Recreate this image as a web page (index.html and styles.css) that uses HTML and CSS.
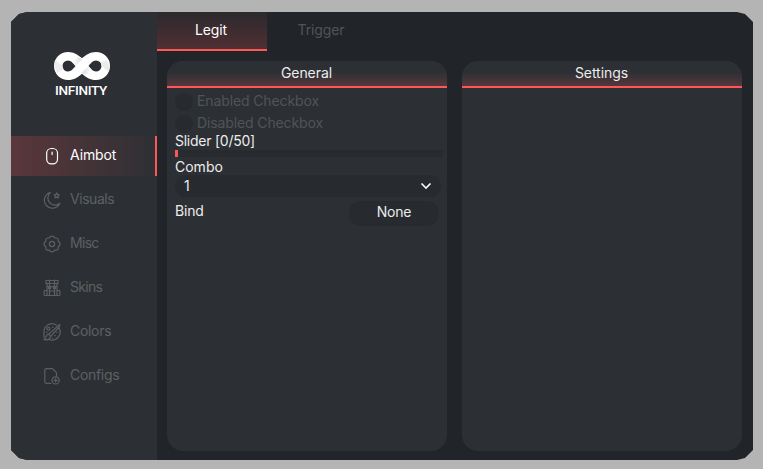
FILE: index.html
```html
<!DOCTYPE html>
<html lang="en">
<head>
<meta charset="utf-8">
<title>Infinity</title>
<link rel="stylesheet" href="styles.css">
</head>
<body>
<div class="window">
  <aside class="sidebar">
    <div class="brand">
      <svg class="brand-mark" viewBox="0 0 56 28">
        <defs>
          <linearGradient id="fold-left" x1="0" y1="0" x2="1" y2="0"><stop offset="0" stop-color="#fff"/><stop offset="1" stop-color="#dcddde"/></linearGradient>
          <linearGradient id="fold-right" x1="1" y1="0" x2="0" y2="0"><stop offset="0" stop-color="#fff"/><stop offset="1" stop-color="#dcddde"/></linearGradient>
        </defs>
        <path fill="#fff" fill-rule="evenodd" d="M14 0C20 0 24 3 28 6.300 32 3 36 0 42 0a14 14 0 0 1 0 28C36 28 32 25 28 21.700 24 25 20 28 14 28A14 14 0 0 1 14 0ZM14 8.500a5.500 5.500 0 0 0 0 11C17 19.500 19.500 16.500 21.500 14 19.500 11.500 17 8.500 14 8.500ZM42 8.500C39 8.500 36.500 11.500 34.500 14 36.500 16.500 39 19.500 42 19.500a5.500 5.500 0 0 0 0-11Z"/>
        <path fill="url(#fold-left)" d="M18 9.800 24.500 5 28.200 7.500 21.500 14Z"/>
        <path fill="url(#fold-right)" d="M38 18.200 31.500 23 27.800 20.500 34.500 14Z"/>
        <path fill="#ececed" d="M1.500 8 8.500 14l.5 3.500-6 3.500Q-.5 14 1.500 8ZM54.500 20 47.500 14 47 10.500 53 8Q56.500 14 54.500 20Z"/>
      </svg>
      <span class="brand-name">INFINITY</span>
    </div>
    <nav class="nav">
      <a class="nav-item active"><svg class="icon" viewBox="0 0 18 18"><rect x="3.700" y="1.500" width="10.800" height="15.300" rx="4.600"/><path d="M9.100 5v2.600"/></svg><span>Aimbot</span></a>
      <a class="nav-item"><svg class="icon" viewBox="0 0 18 18"><path d="M7.300 1.500A8 8 0 1 0 16.800 12.300 7 7 0 0 1 7.300 1.500Z"/><path d="m13.700 2 .8 1.600 1.800.3-1.300 1.200.3 1.800-1.600-.8-1.600.8.300-1.800L11.100 3.900l1.800-.3Z"/></svg><span class="tight">Visuals</span></a>
      <a class="nav-item"><svg class="icon" viewBox="0 0 18 18"><path d="M7 1.700Q9 .5 11 1.700L11.700 3 13.600 3Q15.400 3.400 15.300 5.300L15.200 6.400 16.500 7.400Q17.500 9 16.500 10.700L15.200 11.700 15.300 13.400Q14.900 15.200 13 15.100L11.700 15 10.800 16.300Q9 17.400 7.200 16.300L6.300 15 4.600 15.100Q2.800 14.900 2.800 13L2.900 11.700 1.500 10.700Q.5 9 1.500 7.400L2.900 6.400 2.800 4.900Q3.100 3.100 4.900 3L6.300 3Z"/><circle cx="9" cy="9" r="2.600"/></svg><span class="tighter">Misc</span></a>
      <a class="nav-item"><svg class="icon" viewBox="0 0 18 18"><path d="M3 1.500h12v3H3ZM4 4.500v11M14 4.500v11M6.500 1v15.500M11.500 1v15.500M4 7.500h10M6 12h6M3.500 16.500h11M1.500 11.500H4v5H2.200Q1 16.500 1 15v-2.200ZM16.500 11.500H14v5h1.800q1.200 0 1.200-1.500v-2.200Z"/><circle cx="6.500" cy="8.800" r="1.200"/><circle cx="11.500" cy="8.800" r="1.200"/></svg><span class="tighter">Skins</span></a>
      <a class="nav-item"><svg class="icon" viewBox="0 0 18 18"><path d="M13.500 2.200A8 8 0 0 0 1 9v5M16 5a8 8 0 0 1-10.500 11.200M16.800 1.500 5.600 11.100l2.100 2.200L16.200 4ZM5.300 11.200C3 11.200 3.500 14.500 1 16.700c3 .5 6.500-.3 6.500-3.300"/><circle cx="5.500" cy="5.800" r="1.500"/><path d="M9.400 4.100h.6M3.500 9.300h.5M13.600 9.500h.4M11.700 12.700h.5M9.600 15h.3"/></svg><span class="slim">Colors</span></a>
      <a class="nav-item"><svg class="icon" viewBox="0 0 18 18"><path d="M7.800 16.300H3.300Q1.800 16.300 1.800 14.500v-11Q1.800 1.700 3.500 1.700H9.500L13.500 5.700v3.300"/><circle cx="12.600" cy="13.400" r="3.600"/><path d="M12.600 11.800v3.200M11 13.400h3.200"/></svg><span class="slim">Configs</span></a>
    </nav>
  </aside>
  <main class="main">
    <div class="tabs">
      <a class="tab active">Legit</a>
      <a class="tab">Trigger</a>
    </div>
    <div class="panels">
      <section class="panel">
        <h2 class="panel-title">General</h2>
        <div class="panel-body">
          <div class="check"><i class="dot"></i><span>Enabled Checkbox</span></div>
          <div class="check"><i class="dot"></i><span>Disabled Checkbox</span></div>
          <div class="slider-label">Slider [0/50]</div>
          <div class="track"><div class="handle"></div></div>
          <div class="combo-label">Combo</div>
          <div class="combo"><span>1</span><svg class="chevron" viewBox="0 0 12 8"><path d="m1.500 1.500 4.500 4.500 4.500-4.500"/></svg></div>
          <div class="bind"><span class="bind-label">Bind</span><span class="bind-button">None</span></div>
        </div>
      </section>
      <section class="panel">
        <h2 class="panel-title">Settings</h2>
      </section>
    </div>
  </main>
</div>
</body>
</html>
```
FILE: styles.css
```css
* { box-sizing: border-box; }
body {
  margin: 0;
  height: 469px;
  padding: 12px 10px 9px 11px;
  background: #b4b4b4;
  color: #ececec;
  font: 14px/18px Inter, "Liberation Sans", sans-serif;
  overflow: hidden;
}
.window {
  display: flex;
  height: 448px;
  background: #212529;
  clip-path: polygon(0 10px, 8px 2px, 16px 0, calc(100% - 16px) 0, calc(100% - 8px) 2px, 100% 10px, 100% calc(100% - 10px), calc(100% - 8px) calc(100% - 2px), calc(100% - 16px) 100%, 16px 100%, 8px calc(100% - 2px), 0 calc(100% - 10px));
}
.sidebar { width: 146px; background: #2c3034; }
.brand {
  height: 124px;
  padding: 40px 0 0 43px;
}
.brand-mark { display: block; width: 56px; height: 28px; }
.brand-name {
  display: block;
  margin: 2px 0 0 1px;
  font: 500 13px/16px Roboto, sans-serif;
  font-size: 13.5px;
  letter-spacing: -0.3px;
  color: #fff;
}
.nav { display: grid; gap: 4px; }
.nav-item {
  display: flex;
  align-items: center;
  gap: 9px;
  height: 40px;
  padding: 0 0 1px 32px;
  color: #5d6063;
}
.nav-item span { margin-top: -1px; letter-spacing: -0.1px; }
.nav-item .slim { letter-spacing: -0.3px; }
.nav-item .tight { letter-spacing: -0.45px; }
.nav-item .tighter { letter-spacing: -0.7px; }
.nav-item.active {
  color: #fff;
  background: linear-gradient(90deg, #5b373b, #2e3034);
  border-right: 2px solid #ff5757;
}
.icon {
  width: 18px;
  height: 18px;
  fill: none;
  stroke: currentColor;
  stroke-width: 1.2;
  stroke-linejoin: round;
  stroke-linecap: round;
}
.main { flex: 1; }
.tabs { display: flex; height: 39px; }
.tab {
  width: 110px;
  padding: 9px 2px 0 0;
  text-align: center;
  letter-spacing: -0.1px;
  color: #515457;
}
.tab.active {
  color: #fff;
  background: linear-gradient(#2b292d, #502f33);
  border-bottom: 2px solid #ff5757;
}
.panels {
  display: grid;
  grid-template-columns: 280px 280px;
  gap: 15px;
  padding: 10px 0 0 10px;
}
.panel {
  height: 390px;
  background: #2c3034;
  border-radius: 16px;
  overflow: hidden;
}
.panel-title {
  height: 27px;
  margin: 0;
  padding: 3px 1px 0 0;
  font-size: 14px;
  font-weight: 400;
  line-height: 18px;
  letter-spacing: -0.05px;
  text-align: center;
  background: linear-gradient(#2c3034 45%, #55373b);
  border-bottom: 2px solid #ff5757;
}
.panel-body { padding: 5px 8px; }
.check {
  display: flex;
  gap: 4px;
  height: 18px;
  margin-bottom: 4px;
  color: #515457;
  line-height: 15px;
  letter-spacing: -0.12px;
}
.check + .slider-label { margin-top: -4px; }
.dot { width: 18px; height: 18px; border-radius: 50%; background: #272b2f; }
.slider-label { height: 17px; line-height: 15px; letter-spacing: -0.25px; }
.track { width: 268px; height: 7px; background: #272b2f; }
.handle { width: 3px; height: 7px; background: #ff5757; }
.combo-label { height: 18px; line-height: 19px; }
.combo {
  display: flex;
  align-items: center;
  justify-content: space-between;
  width: 266px;
  height: 22px;
  padding: 0 9px 1px 9px;
  border-radius: 11px;
  background: #272b2f;
}
.chevron { width: 12px; height: 8px; margin-top: 1px; fill: none; stroke: #fff; stroke-width: 1.6; }
.bind { display: flex; justify-content: space-between; width: 264px; margin-top: 4px; }
.bind-label { line-height: 20px; letter-spacing: -0.2px; }
.bind-button {
  width: 90px;
  height: 25px;
  border-radius: 12px;
  background: #272b2f;
  line-height: 22px;
  letter-spacing: -0.2px;
  text-align: center;
}
```
